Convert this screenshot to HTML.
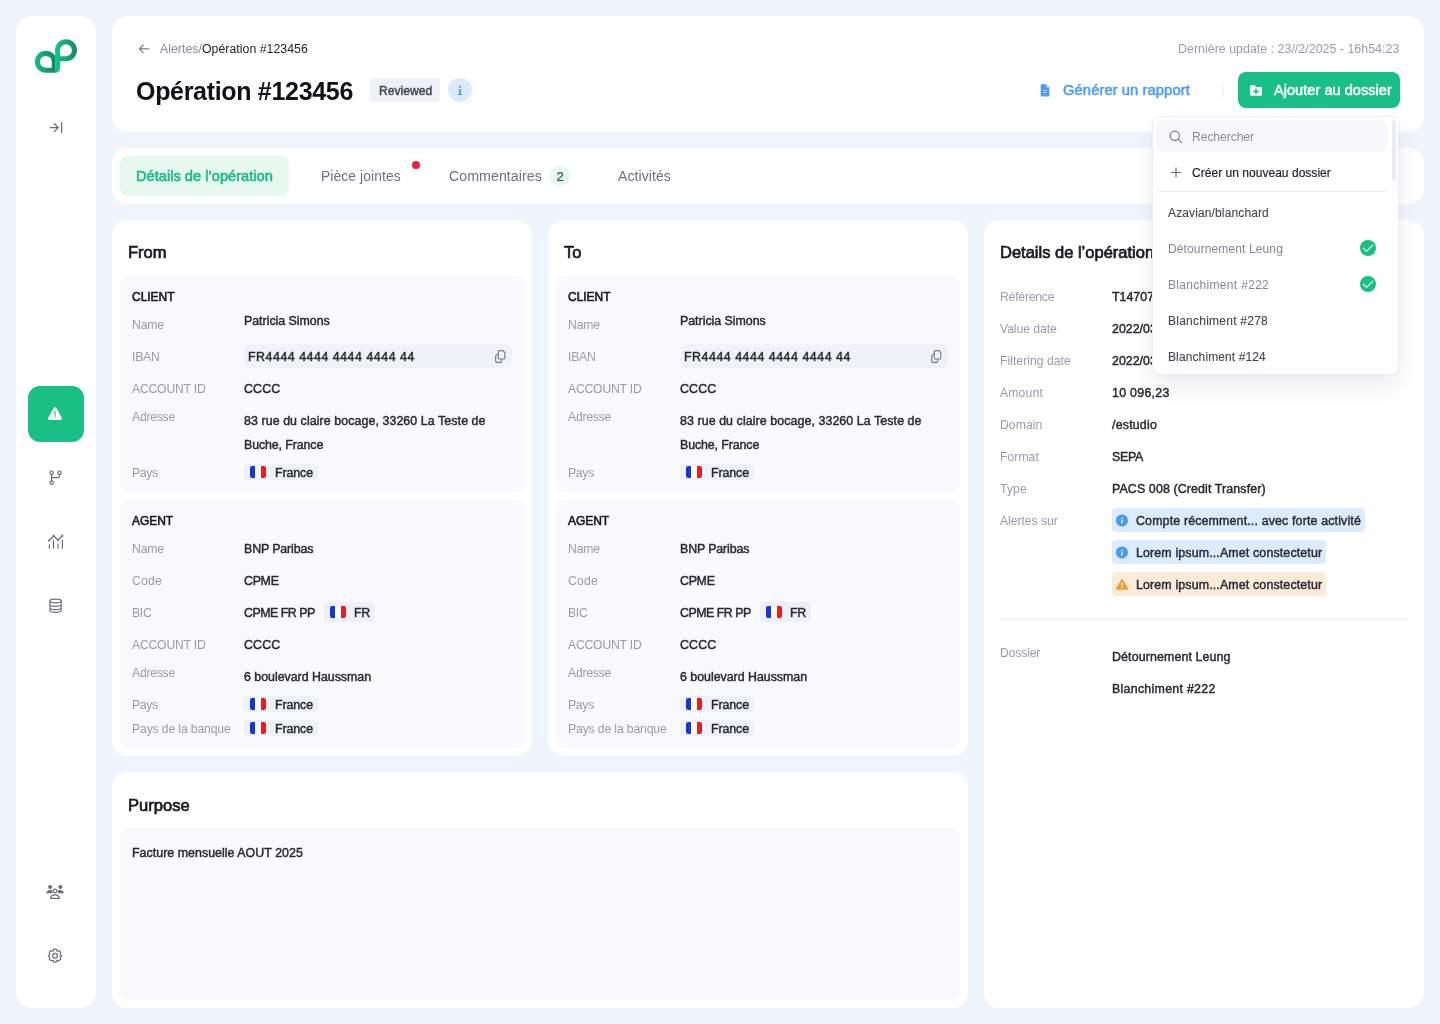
<!DOCTYPE html>
<html><head><meta charset="utf-8">
<style>
*{margin:0;padding:0;box-sizing:border-box}
html,body{width:1440px;height:1024px;overflow:hidden;background:#F0F4FC;font-family:"Liberation Sans",sans-serif;color:#2A2A35}
.a{position:absolute}
.card{position:absolute;background:#fff;border-radius:16px}
.sec{position:absolute;background:#F9F9FE;border-radius:8px}
.t{position:absolute;white-space:nowrap;line-height:20px;height:20px;will-change:transform}
.lb{font-size:11.8px;color:#A3A3B4}
.vl{font-size:12.4px;color:#2A2A35;-webkit-text-stroke:0.25px #2A2A35}
.hd{font-size:15px;font-weight:700;color:#1C1C24;letter-spacing:-0.2px}
.cap{font-size:11.5px;font-weight:700;color:#1C1C24}
.chip{position:absolute;background:#EEF1F5;border-radius:4px;height:16px}
.flag{position:absolute;width:16px;height:12px;border-radius:2px;overflow:hidden;background:linear-gradient(90deg,#1437D9 0,#1437D9 33.3%,#fff 33.3%,#fff 66.6%,#EC1C24 66.6%)}
svg{position:absolute;overflow:visible}
</style></head><body>

<!-- SIDEBAR -->
<div class="card" style="left:16px;top:16px;width:80px;height:992px"></div>
<svg style="left:0;top:0" width="100" height="100" viewBox="0 0 100 100">
<defs>
<linearGradient id="lg1" x1="34.9" y1="0" x2="55" y2="0" gradientUnits="userSpaceOnUse"><stop offset="0" stop-color="#1CBD85"/><stop offset="1" stop-color="#12875E"/></linearGradient>
<linearGradient id="lg2" x1="55" y1="0" x2="77" y2="0" gradientUnits="userSpaceOnUse"><stop offset="0" stop-color="#19C68A"/><stop offset="1" stop-color="#0F8A5E"/></linearGradient>
</defs>
<path fill="url(#lg1)" fill-rule="evenodd" d="M34.87 61.78A11 11 0 0 1 45.87 50.78A11 11 0 0 1 55.05 55.72V72.78H45.87A11 11 0 0 1 34.87 61.78Z M39.97 61.78A5.9 5.9 0 0 0 45.87 67.68H51.77V61.78A5.9 5.9 0 0 0 45.87 55.88A5.9 5.9 0 0 0 39.97 61.78Z"/>
<path fill="url(#lg2)" fill-rule="evenodd" d="M55.05 50.26A11 11 0 0 1 66 39.26A11 11 0 0 1 77 50.26A11 11 0 0 1 66 61.26H60.1V68.08A4.7 4.7 0 0 1 55.4 72.78H55.05Z M60.1 50.26V56.16H66A5.9 5.9 0 0 0 71.9 50.26A5.9 5.9 0 0 0 66 44.36A5.9 5.9 0 0 0 60.1 50.26Z"/>
<g fill="none" stroke="#6B6B7B" stroke-width="1.3" stroke-linecap="round" stroke-linejoin="round">
<path d="M50.2 127.6H58.4M54.4 123.8L58.4 127.6L54.4 131.4M61.6 122.6V132.6"/>
</g>
</svg>
<div class="a" style="left:28px;top:386px;width:56px;height:56px;border-radius:12px;background:#19BF84"></div>
<svg style="left:0;top:0" width="100" height="1024" viewBox="0 0 100 1024">
<path fill="#fff" d="M55 407.3C54.4 407.3 53.9 407.6 53.6 408.1L48.2 417.8C47.6 418.8 48.3 420 49.5 420H60.5C61.7 420 62.4 418.8 61.8 417.8L56.4 408.1C56.1 407.6 55.6 407.3 55 407.3Z"/>
<rect x="54.4" y="411" width="1.2" height="4.8" rx="0.5" fill="#19BF84"/>
<rect x="54.4" y="416.6" width="1.2" height="1.2" rx="0.5" fill="#19BF84"/>
<g fill="none" stroke="#6B6B7B" stroke-width="1.2" stroke-linecap="round" stroke-linejoin="round">
<circle cx="51.6" cy="472.7" r="1.7"/><circle cx="59.5" cy="472.7" r="1.7"/><circle cx="51.6" cy="482.6" r="1.7"/>
<path d="M51.6 474.4V480.9M59.5 474.4V476.2A1.5 1.5 0 0 1 58 477.7H51.6"/>
<path d="M49.1 540.5L53.6 535.8L58 540L62.4 535.8"/>
</g><g fill="#6B6B7B"><circle cx="49.1" cy="540.5" r="1"/><circle cx="53.6" cy="535.8" r="1"/><circle cx="58" cy="540" r="1"/><circle cx="62.4" cy="535.8" r="1"/></g><g fill="none" stroke="#6B6B7B" stroke-width="1.2" stroke-linecap="round" stroke-linejoin="round">
<path d="M49.4 544.8V548.2M53.5 540.6V548.2M58 544.2V548.2M62.4 540.4V548.2"/>
<ellipse cx="55.6" cy="601" rx="5.6" ry="1.8"/>
<path d="M50 601V610.6C50 611.6 52.5 612.4 55.6 612.4C58.7 612.4 61.2 611.6 61.2 610.6V601M50 604.6C50 605.6 52.5 606.4 55.6 606.4C58.7 606.4 61.2 605.6 61.2 604.6M50 607.8C50 608.8 52.5 609.6 55.6 609.6C58.7 609.6 61.2 608.8 61.2 607.8"/>
</g>
<g fill="#6B6B7B">
<circle cx="50.1" cy="886.9" r="2"/><circle cx="60.4" cy="886.9" r="2"/>
<path d="M46.2 893.3C46.4 891.3 47.8 890 50 890C51.2 890 52 890.3 52.6 890.8L51.8 893.3Z"/>
<path d="M63.9 893.3C63.7 891.3 62.3 890 60.1 890C58.9 890 58.1 890.3 57.5 890.8L58.3 893.3Z"/>
</g>
<g fill="none" stroke="#6B6B7B" stroke-width="1.2" stroke-linejoin="round">
<circle cx="55" cy="891" r="1.9"/>
<path d="M50.6 898.3C50.8 896 52.6 894.8 55 894.8C57.4 894.8 59.2 896 59.4 898.3Z"/>
<path d="M53.7 949.2H56.3L56.9 951.2L58.9 950.6L60.7 952.3L60.2 954.4L61.7 955.7L60.2 957L60.7 959.1L58.9 960.8L56.9 960.2L56.3 962.2H53.7L53.1 960.2L51.1 960.8L49.3 959.1L49.8 957L48.3 955.7L49.8 954.4L49.3 952.3L51.1 950.6L53.1 951.2Z"/>
<circle cx="55" cy="955.7" r="2.4"/>
</g>
</svg>

<!-- HEADER -->
<div class="card" style="left:112px;top:16px;width:1312px;height:116px"></div>
<svg style="left:0;top:0" width="1440" height="120" viewBox="0 0 1440 120">
<path d="M148.7 48.8H139.6M143.2 45L139.4 48.8L143.2 52.6" fill="none" stroke="#7C7C8C" stroke-width="1.2" stroke-linecap="round" stroke-linejoin="round"/>
<circle cx="460" cy="90" r="12" fill="#DCEAFD"/>
<g fill="#4B9BFF"><rect x="459" y="85.9" width="2" height="1.9" rx="0.3"/><path d="M458 89.2H461V94.1H462.1V95H458V94.1H459.1V90.1H458Z"/></g>
<path fill="#4B9BFF" d="M1041.8 84.3H1046.3L1049.4 87.4V95.3A1.2 1.2 0 0 1 1048.2 96.5H1041.9A1.2 1.2 0 0 1 1040.7 95.3V85.5A1.2 1.2 0 0 1 1041.8 84.3Z"/>
<g stroke="#fff" stroke-width="0.9" opacity="0.75"><path d="M1043.1 90.5H1046.9M1043.1 92.6H1046.9"/></g>
<path fill="#fff" opacity="0.6" d="M1046 84.6V86.8A0.8 0.8 0 0 0 1046.8 87.6H1049Z"/>
<rect x="1222.4" y="82" width="1" height="15.5" fill="#ECECF4"/>
<rect x="1238" y="72" width="162" height="36" rx="8" fill="#19BF84"/>
<path fill="#fff" d="M1251.1 85.1H1254.6L1256 86.9H1260.9A1 1 0 0 1 1261.9 87.9V94.8A1 1 0 0 1 1260.9 95.8H1251.1A1 1 0 0 1 1250.1 94.8V86.1A1 1 0 0 1 1251.1 85.1Z"/>
<path d="M1256 89.1V93.7M1253.7 91.4H1258.3" stroke="#19BF84" stroke-width="1.5" stroke-linecap="round"/>
</svg>
<div class="a" style="left:370px;top:78px;width:70px;height:24px;border-radius:4px;background:#F0F0F8"></div>

<!-- TABS -->
<div class="card" style="left:112px;top:148px;width:1312px;height:56px"></div>
<div class="a" style="left:120px;top:156px;width:169px;height:40px;border-radius:8px;background:#E6F8F0"></div>
<div class="a" style="left:412px;top:161px;width:8px;height:8px;border-radius:50%;background:#E8203A"></div>
<div class="a" style="left:550px;top:166px;width:20px;height:20px;border-radius:50%;background:#E6F8F0"></div>


<div class="t" style="left:160.00px;top:39.10px;font-size:12.3px;color:#8A8A9A;letter-spacing:0.033px;">Alertes/<span style="color:#1E1E28">Opération #123456</span></div>
<div class="t" style="left:136.20px;top:76.20px;font-size:25px;color:#111118;line-height:30px;height:30px;font-weight:700;letter-spacing:-0.315px;">Opération #123456</div>
<div class="t" style="left:378.70px;top:80.50px;font-size:12px;color:#44444F;-webkit-text-stroke:0.45px #44444F;letter-spacing:0.085px;">Reviewed</div>
<div class="t" style="left:1178.00px;top:39.00px;font-size:12.4px;color:#9A9AAC;letter-spacing:0.022px;">Dernière update : 23//2/2025 - 16h54:23</div>
<div class="t" style="left:1063.30px;top:80.20px;font-size:14.8px;color:#4B9BFF;-webkit-text-stroke:0.5px #4B9BFF;letter-spacing:0.055px;">Générer un rapport</div>
<div class="t" style="left:1274.40px;top:80.20px;font-size:14.5px;color:#FFFFFF;-webkit-text-stroke:0.5px #FFFFFF;letter-spacing:0.054px;">Ajouter au dossier</div>
<div class="t" style="left:135.80px;top:166.00px;font-size:14.6px;color:#1BBB80;-webkit-text-stroke:0.6px #1BBB80;letter-spacing:0.024px;">Détails de l’opération</div>
<div class="t" style="left:321.00px;top:166.00px;font-size:13.9px;color:#707082;letter-spacing:0.086px;">Pièce jointes</div>
<div class="t" style="left:449.40px;top:166.00px;font-size:14.15px;color:#707082;letter-spacing:0.077px;">Commentaires</div>
<div class="t" style="left:550.00px;top:167.00px;font-size:13px;color:#0F5A3C;-webkit-text-stroke:0.2px #0F5A3C;width:20px;text-align:center;">2</div>
<div class="t" style="left:618.30px;top:166.00px;font-size:14px;color:#707082;letter-spacing:0.084px;">Activités</div>
<!-- FROM -->
<div class="card" style="left:112px;top:220px;width:420px;height:536px"></div>
<div class="t" style="left:128.30px;top:242.20px;font-size:16.5px;color:#1A1A22;-webkit-text-stroke:0.7px #1A1A22;">From</div>
<div class="sec" style="left:120px;top:276px;width:404px;height:216px"></div>
<div class="sec" style="left:120px;top:500px;width:404px;height:248px"></div>
<div class="t" style="left:132.20px;top:286.50px;font-size:12px;color:#1A1A22;-webkit-text-stroke:0.6px #1A1A22;letter-spacing:-0.037px;">CLIENT</div>
<div class="t" style="left:132.40px;top:314.80px;font-size:12.2px;color:#9A9AAC;letter-spacing:-0.139px;">Name</div>
<div class="t" style="left:243.90px;top:311.20px;font-size:12.4px;color:#2A2A35;-webkit-text-stroke:0.45px #2A2A35;letter-spacing:-0.020px;">Patricia Simons</div>
<div class="t" style="left:132.40px;top:346.50px;font-size:12.2px;color:#9A9AAC;letter-spacing:-0.218px;">IBAN</div>
<div class="a" style="left:244px;top:344px;width:268px;height:24px;border-radius:6px;background:#F1F1F8"></div>
<div class="t" style="left:247.90px;top:346.50px;font-size:12.4px;color:#2A2A35;-webkit-text-stroke:0.45px #2A2A35;letter-spacing:0.521px;">FR4444 4444 4444 4444 44</div>
<svg style="left:0px;top:0" width="600" height="400" viewBox="0 0 600 400"><g fill="none" stroke="#76768A" stroke-width="1.1" stroke-linejoin="round"><path d="M499.4 350.6H502.9L504.8 352.5V357.9A1.1 1.1 0 0 1 503.7 359H499.4A1.1 1.1 0 0 1 498.3 357.9V351.7A1.1 1.1 0 0 1 499.4 350.6Z"/><path d="M498.3 353.8L495.7 355.6V361.3A1.1 1.1 0 0 0 496.8 362.4H500.6A1.1 1.1 0 0 0 501.7 361.3V359"/></g></svg>
<div class="t" style="left:132.40px;top:378.50px;font-size:12.2px;color:#9A9AAC;letter-spacing:-0.203px;">ACCOUNT ID</div>
<div class="t" style="left:243.90px;top:378.50px;font-size:12.4px;color:#2A2A35;-webkit-text-stroke:0.45px #2A2A35;letter-spacing:0.134px;">CCCC</div>
<div class="t" style="left:132.40px;top:406.70px;font-size:12.2px;color:#9A9AAC;letter-spacing:-0.253px;">Adresse</div>
<div class="t" style="left:243.90px;top:410.80px;font-size:12.4px;color:#2A2A35;-webkit-text-stroke:0.45px #2A2A35;letter-spacing:0.082px;">83 rue du claire bocage, 33260 La Teste de</div>
<div class="t" style="left:243.90px;top:434.80px;font-size:12.4px;color:#2A2A35;-webkit-text-stroke:0.45px #2A2A35;letter-spacing:-0.108px;">Buche, France</div>
<div class="t" style="left:132.40px;top:463.10px;font-size:12.2px;color:#9A9AAC;letter-spacing:-0.300px;">Pays</div>
<div class="a" style="left:244px;top:464px;width:74px;height:16px;border-radius:4px;background:#EEF1F5"></div>
<div class="flag" style="left:250px;top:466.0px"></div>
<div class="t" style="left:274.60px;top:463.10px;font-size:12.4px;color:#2A2A35;-webkit-text-stroke:0.45px #2A2A35;letter-spacing:-0.096px;">France</div>
<div class="t" style="left:132.40px;top:510.90px;font-size:12px;color:#1A1A22;-webkit-text-stroke:0.6px #1A1A22;letter-spacing:-0.061px;">AGENT</div>
<div class="t" style="left:132.40px;top:538.60px;font-size:12.2px;color:#9A9AAC;letter-spacing:-0.139px;">Name</div>
<div class="t" style="left:243.90px;top:538.60px;font-size:12.4px;color:#2A2A35;-webkit-text-stroke:0.45px #2A2A35;letter-spacing:-0.122px;">BNP Paribas</div>
<div class="t" style="left:132.40px;top:570.50px;font-size:12.2px;color:#9A9AAC;letter-spacing:0.220px;">Code</div>
<div class="t" style="left:243.90px;top:570.50px;font-size:12.4px;color:#2A2A35;-webkit-text-stroke:0.45px #2A2A35;letter-spacing:-0.300px;">CPME</div>
<div class="t" style="left:132.40px;top:602.50px;font-size:12.2px;color:#9A9AAC;letter-spacing:-0.300px;">BIC</div>
<div class="t" style="left:243.90px;top:602.50px;font-size:12.4px;color:#2A2A35;-webkit-text-stroke:0.45px #2A2A35;letter-spacing:-0.493px;">CPME FR PP</div>
<div class="a" style="left:324px;top:602px;width:51px;height:20px;border-radius:4px;background:#EEEFF8"></div>
<div class="flag" style="left:330px;top:606.0px"></div>
<div class="t" style="left:354.00px;top:602.50px;font-size:12.4px;color:#2A2A35;-webkit-text-stroke:0.45px #2A2A35;letter-spacing:-0.300px;">FR</div>
<div class="t" style="left:132.40px;top:634.60px;font-size:12.2px;color:#9A9AAC;letter-spacing:-0.203px;">ACCOUNT ID</div>
<div class="t" style="left:243.90px;top:634.60px;font-size:12.4px;color:#2A2A35;-webkit-text-stroke:0.45px #2A2A35;letter-spacing:0.134px;">CCCC</div>
<div class="t" style="left:132.40px;top:663.00px;font-size:12.2px;color:#9A9AAC;letter-spacing:-0.253px;">Adresse</div>
<div class="t" style="left:243.90px;top:667.00px;font-size:12.4px;color:#2A2A35;-webkit-text-stroke:0.45px #2A2A35;letter-spacing:-0.017px;">6 boulevard Haussman</div>
<div class="t" style="left:132.40px;top:695.00px;font-size:12.2px;color:#9A9AAC;letter-spacing:-0.300px;">Pays</div>
<div class="a" style="left:244px;top:696px;width:74px;height:16px;border-radius:4px;background:#EEF1F5"></div>
<div class="flag" style="left:250px;top:698.0px"></div>
<div class="t" style="left:274.60px;top:695.00px;font-size:12.4px;color:#2A2A35;-webkit-text-stroke:0.45px #2A2A35;letter-spacing:-0.096px;">France</div>
<div class="t" style="left:132.40px;top:718.50px;font-size:12.2px;color:#9A9AAC;letter-spacing:-0.136px;">Pays de la banque</div>
<div class="a" style="left:244px;top:720px;width:74px;height:16px;border-radius:4px;background:#EEF1F5"></div>
<div class="flag" style="left:250px;top:722.0px"></div>
<div class="t" style="left:274.60px;top:718.50px;font-size:12.4px;color:#2A2A35;-webkit-text-stroke:0.45px #2A2A35;letter-spacing:-0.096px;">France</div>
<!-- TO -->
<div class="card" style="left:548px;top:220px;width:420px;height:536px"></div>
<div class="t" style="left:564.30px;top:242.20px;font-size:16.5px;color:#1A1A22;-webkit-text-stroke:0.7px #1A1A22;">To</div>
<div class="sec" style="left:556px;top:276px;width:404px;height:216px"></div>
<div class="sec" style="left:556px;top:500px;width:404px;height:248px"></div>
<div class="t" style="left:568.20px;top:286.50px;font-size:12px;color:#1A1A22;-webkit-text-stroke:0.6px #1A1A22;letter-spacing:-0.037px;">CLIENT</div>
<div class="t" style="left:568.40px;top:314.80px;font-size:12.2px;color:#9A9AAC;letter-spacing:-0.139px;">Name</div>
<div class="t" style="left:679.90px;top:311.20px;font-size:12.4px;color:#2A2A35;-webkit-text-stroke:0.45px #2A2A35;letter-spacing:-0.020px;">Patricia Simons</div>
<div class="t" style="left:568.40px;top:346.50px;font-size:12.2px;color:#9A9AAC;letter-spacing:-0.218px;">IBAN</div>
<div class="a" style="left:680px;top:344px;width:268px;height:24px;border-radius:6px;background:#F1F1F8"></div>
<div class="t" style="left:683.90px;top:346.50px;font-size:12.4px;color:#2A2A35;-webkit-text-stroke:0.45px #2A2A35;letter-spacing:0.521px;">FR4444 4444 4444 4444 44</div>
<svg style="left:436px;top:0" width="600" height="400" viewBox="0 0 600 400"><g fill="none" stroke="#76768A" stroke-width="1.1" stroke-linejoin="round"><path d="M499.4 350.6H502.9L504.8 352.5V357.9A1.1 1.1 0 0 1 503.7 359H499.4A1.1 1.1 0 0 1 498.3 357.9V351.7A1.1 1.1 0 0 1 499.4 350.6Z"/><path d="M498.3 353.8L495.7 355.6V361.3A1.1 1.1 0 0 0 496.8 362.4H500.6A1.1 1.1 0 0 0 501.7 361.3V359"/></g></svg>
<div class="t" style="left:568.40px;top:378.50px;font-size:12.2px;color:#9A9AAC;letter-spacing:-0.203px;">ACCOUNT ID</div>
<div class="t" style="left:679.90px;top:378.50px;font-size:12.4px;color:#2A2A35;-webkit-text-stroke:0.45px #2A2A35;letter-spacing:0.134px;">CCCC</div>
<div class="t" style="left:568.40px;top:406.70px;font-size:12.2px;color:#9A9AAC;letter-spacing:-0.253px;">Adresse</div>
<div class="t" style="left:679.90px;top:410.80px;font-size:12.4px;color:#2A2A35;-webkit-text-stroke:0.45px #2A2A35;letter-spacing:0.082px;">83 rue du claire bocage, 33260 La Teste de</div>
<div class="t" style="left:679.90px;top:434.80px;font-size:12.4px;color:#2A2A35;-webkit-text-stroke:0.45px #2A2A35;letter-spacing:-0.108px;">Buche, France</div>
<div class="t" style="left:568.40px;top:463.10px;font-size:12.2px;color:#9A9AAC;letter-spacing:-0.300px;">Pays</div>
<div class="a" style="left:680px;top:464px;width:74px;height:16px;border-radius:4px;background:#EEF1F5"></div>
<div class="flag" style="left:686px;top:466.0px"></div>
<div class="t" style="left:710.60px;top:463.10px;font-size:12.4px;color:#2A2A35;-webkit-text-stroke:0.45px #2A2A35;letter-spacing:-0.096px;">France</div>
<div class="t" style="left:568.40px;top:510.90px;font-size:12px;color:#1A1A22;-webkit-text-stroke:0.6px #1A1A22;letter-spacing:-0.061px;">AGENT</div>
<div class="t" style="left:568.40px;top:538.60px;font-size:12.2px;color:#9A9AAC;letter-spacing:-0.139px;">Name</div>
<div class="t" style="left:679.90px;top:538.60px;font-size:12.4px;color:#2A2A35;-webkit-text-stroke:0.45px #2A2A35;letter-spacing:-0.122px;">BNP Paribas</div>
<div class="t" style="left:568.40px;top:570.50px;font-size:12.2px;color:#9A9AAC;letter-spacing:0.220px;">Code</div>
<div class="t" style="left:679.90px;top:570.50px;font-size:12.4px;color:#2A2A35;-webkit-text-stroke:0.45px #2A2A35;letter-spacing:-0.300px;">CPME</div>
<div class="t" style="left:568.40px;top:602.50px;font-size:12.2px;color:#9A9AAC;letter-spacing:-0.300px;">BIC</div>
<div class="t" style="left:679.90px;top:602.50px;font-size:12.4px;color:#2A2A35;-webkit-text-stroke:0.45px #2A2A35;letter-spacing:-0.493px;">CPME FR PP</div>
<div class="a" style="left:760px;top:602px;width:51px;height:20px;border-radius:4px;background:#EEEFF8"></div>
<div class="flag" style="left:766px;top:606.0px"></div>
<div class="t" style="left:790.00px;top:602.50px;font-size:12.4px;color:#2A2A35;-webkit-text-stroke:0.45px #2A2A35;letter-spacing:-0.300px;">FR</div>
<div class="t" style="left:568.40px;top:634.60px;font-size:12.2px;color:#9A9AAC;letter-spacing:-0.203px;">ACCOUNT ID</div>
<div class="t" style="left:679.90px;top:634.60px;font-size:12.4px;color:#2A2A35;-webkit-text-stroke:0.45px #2A2A35;letter-spacing:0.134px;">CCCC</div>
<div class="t" style="left:568.40px;top:663.00px;font-size:12.2px;color:#9A9AAC;letter-spacing:-0.253px;">Adresse</div>
<div class="t" style="left:679.90px;top:667.00px;font-size:12.4px;color:#2A2A35;-webkit-text-stroke:0.45px #2A2A35;letter-spacing:-0.017px;">6 boulevard Haussman</div>
<div class="t" style="left:568.40px;top:695.00px;font-size:12.2px;color:#9A9AAC;letter-spacing:-0.300px;">Pays</div>
<div class="a" style="left:680px;top:696px;width:74px;height:16px;border-radius:4px;background:#EEF1F5"></div>
<div class="flag" style="left:686px;top:698.0px"></div>
<div class="t" style="left:710.60px;top:695.00px;font-size:12.4px;color:#2A2A35;-webkit-text-stroke:0.45px #2A2A35;letter-spacing:-0.096px;">France</div>
<div class="t" style="left:568.40px;top:718.50px;font-size:12.2px;color:#9A9AAC;letter-spacing:-0.136px;">Pays de la banque</div>
<div class="a" style="left:680px;top:720px;width:74px;height:16px;border-radius:4px;background:#EEF1F5"></div>
<div class="flag" style="left:686px;top:722.0px"></div>
<div class="t" style="left:710.60px;top:718.50px;font-size:12.4px;color:#2A2A35;-webkit-text-stroke:0.45px #2A2A35;letter-spacing:-0.096px;">France</div>
<!-- DETAILS -->
<div class="card" style="left:984px;top:220px;width:440px;height:788px"></div>
<div class="t" style="left:1000.30px;top:242.20px;font-size:16.5px;color:#1A1A22;-webkit-text-stroke:0.7px #1A1A22;">Details de l’opération</div>
<div class="t" style="left:1000.40px;top:286.50px;font-size:12.2px;color:#9A9AAC;letter-spacing:-0.217px;">Référence</div>
<div class="t" style="left:1111.80px;top:286.50px;font-size:12.4px;color:#2A2A35;-webkit-text-stroke:0.45px #2A2A35;">T147070000000001</div>
<div class="t" style="left:1000.40px;top:318.50px;font-size:12.2px;color:#9A9AAC;letter-spacing:-0.064px;">Value date</div>
<div class="t" style="left:1111.80px;top:318.50px;font-size:12.4px;color:#2A2A35;-webkit-text-stroke:0.45px #2A2A35;">2022/03/19</div>
<div class="t" style="left:1000.40px;top:350.50px;font-size:12.2px;color:#9A9AAC;letter-spacing:0.027px;">Filtering date</div>
<div class="t" style="left:1111.80px;top:350.50px;font-size:12.4px;color:#2A2A35;-webkit-text-stroke:0.45px #2A2A35;">2022/03/19</div>
<div class="t" style="left:1000.40px;top:382.50px;font-size:12.2px;color:#9A9AAC;letter-spacing:0.157px;">Amount</div>
<div class="t" style="left:1111.80px;top:382.50px;font-size:12.4px;color:#2A2A35;-webkit-text-stroke:0.45px #2A2A35;letter-spacing:0.284px;">10 096,23</div>
<div class="t" style="left:1000.40px;top:414.50px;font-size:12.2px;color:#9A9AAC;letter-spacing:0.060px;">Domain</div>
<div class="t" style="left:1111.80px;top:414.50px;font-size:12.4px;color:#2A2A35;-webkit-text-stroke:0.45px #2A2A35;letter-spacing:0.199px;">/estudio</div>
<div class="t" style="left:1000.40px;top:446.50px;font-size:12.2px;color:#9A9AAC;letter-spacing:0.038px;">Format</div>
<div class="t" style="left:1111.80px;top:446.50px;font-size:12.4px;color:#2A2A35;-webkit-text-stroke:0.45px #2A2A35;letter-spacing:-0.300px;">SEPA</div>
<div class="t" style="left:1000.40px;top:478.50px;font-size:12.2px;color:#9A9AAC;letter-spacing:0.126px;">Type</div>
<div class="t" style="left:1111.80px;top:478.50px;font-size:12.4px;color:#2A2A35;-webkit-text-stroke:0.45px #2A2A35;letter-spacing:0.121px;">PACS 008 (Credit Transfer)</div>
<div class="t" style="left:1000.40px;top:510.50px;font-size:12.2px;color:#9A9AAC;letter-spacing:-0.045px;">Alertes sur</div>
<div class="a" style="left:1112px;top:508px;width:253px;height:24px;border-radius:4px;background:#DCEBFD"></div>
<div class="a" style="left:1112px;top:540px;width:214px;height:24px;border-radius:4px;background:#DCEBFD"></div>
<div class="a" style="left:1112px;top:572px;width:214px;height:24px;border-radius:4px;background:#FDEBDA"></div>
<svg style="left:0;top:0" width="1440" height="1024" viewBox="0 0 1440 1024">
<g><circle cx="1122" cy="520.5" r="6" fill="#4B97F5"/><rect x="1121.3" y="517.6" width="1.4" height="1.3" fill="#fff"/><rect x="1121.3" y="519.7" width="1.4" height="3.7" fill="#fff"/></g>
<g><circle cx="1122" cy="552.6" r="6" fill="#4B97F5"/><rect x="1121.3" y="549.7" width="1.4" height="1.3" fill="#fff"/><rect x="1121.3" y="551.8" width="1.4" height="3.7" fill="#fff"/></g>
<g><path d="M1122 579.8L1127.4 589H1116.6Z" fill="#F29A38" stroke="#F29A38" stroke-width="1.6" stroke-linejoin="round"/><rect x="1121.35" y="582.6" width="1.3" height="3.4" fill="#fff"/><rect x="1121.35" y="587" width="1.3" height="1.2" fill="#fff"/></g>
</svg>
<div class="t" style="left:1136.00px;top:511.20px;font-size:12.4px;color:#2A2A35;-webkit-text-stroke:0.45px #2A2A35;letter-spacing:0.153px;">Compte récemment... avec forte activité</div>
<div class="t" style="left:1136.00px;top:543.20px;font-size:12.4px;color:#2A2A35;-webkit-text-stroke:0.45px #2A2A35;letter-spacing:0.143px;">Lorem ipsum...Amet constectetur</div>
<div class="t" style="left:1136.00px;top:575.20px;font-size:12.4px;color:#2A2A35;-webkit-text-stroke:0.45px #2A2A35;letter-spacing:0.143px;">Lorem ipsum...Amet constectetur</div>
<div class="a" style="left:1000px;top:619px;width:408px;height:1px;background:#EEEEF6"></div>
<div class="t" style="left:1000.40px;top:643.00px;font-size:12.2px;color:#9A9AAC;letter-spacing:-0.152px;">Dossier</div>
<div class="t" style="left:1111.80px;top:647.00px;font-size:12.4px;color:#2A2A35;-webkit-text-stroke:0.45px #2A2A35;letter-spacing:0.122px;">Détournement Leung</div>
<div class="t" style="left:1111.80px;top:679.00px;font-size:12.4px;color:#2A2A35;-webkit-text-stroke:0.45px #2A2A35;letter-spacing:0.273px;">Blanchiment #222</div>
<!-- PURPOSE -->
<div class="card" style="left:112px;top:772px;width:856px;height:236px"></div>
<div class="t" style="left:128.10px;top:794.50px;font-size:16.5px;color:#1A1A22;-webkit-text-stroke:0.7px #1A1A22;letter-spacing:0.055px;">Purpose</div>
<div class="sec" style="left:120px;top:828px;width:840px;height:172px"></div>
<div class="t" style="left:132.40px;top:842.50px;font-size:12.4px;color:#2A2A35;-webkit-text-stroke:0.45px #2A2A35;letter-spacing:0.035px;">Facture mensuelle AOUT 2025</div>
<!-- DROPDOWN -->
<div class="a" style="left:1152.2px;top:116.4px;width:247.2px;height:259px;border-radius:8px;background:#fff;border:1px solid #ECECF8;box-shadow:0 12px 22px rgba(30,30,70,0.075),0 1px 4px rgba(30,30,70,0.03)"></div>
<div class="a" style="left:1156px;top:120px;width:232px;height:32px;border-radius:6px;background:#F8F8FD"></div>
<div class="a" style="left:1392px;top:120px;width:4px;height:60px;border-radius:2px;background:#EBEBF4"></div>
<div class="a" style="left:1156px;top:191px;width:232px;height:1px;background:#EDEDF6"></div>
<svg style="left:0;top:0" width="1440" height="400" viewBox="0 0 1440 400">
<g fill="none" stroke="#7A7A8A" stroke-width="1.2" stroke-linecap="round"><circle cx="1174.8" cy="135.8" r="4.6"/><path d="M1178.2 139.2L1181.6 142.6"/></g>
<path d="M1176 167.8V177.2M1171.3 172.5H1180.7" stroke="#6A6A7A" stroke-width="1.1" stroke-linecap="round"/>
<g><circle cx="1368" cy="248" r="8" fill="#19BF84"/><path d="M1363.3 248.2L1366.5 251.4L1372.8 245.1" fill="none" stroke="#fff" stroke-width="1.15" stroke-linecap="round" stroke-linejoin="round"/></g>
<g><circle cx="1368" cy="284" r="8" fill="#19BF84"/><path d="M1363.3 284.2L1366.5 287.4L1372.8 281.1" fill="none" stroke="#fff" stroke-width="1.15" stroke-linecap="round" stroke-linejoin="round"/></g>
</svg>
<div class="t" style="left:1191.80px;top:126.70px;font-size:12.2px;color:#8A8A9A;letter-spacing:-0.100px;">Rechercher</div>
<div class="t" style="left:1192.00px;top:162.50px;font-size:12px;color:#1F1F2A;-webkit-text-stroke:0.2px #1F1F2A;letter-spacing:0.031px;">Créer un nouveau dossier</div>
<div class="t" style="left:1168.00px;top:203.00px;font-size:12px;color:#454552;-webkit-text-stroke:0.1px #454552;letter-spacing:0.129px;">Azavian/blanchard</div>
<div class="t" style="left:1168.00px;top:239.00px;font-size:12px;color:#858595;letter-spacing:0.121px;">Détournement Leung</div>
<div class="t" style="left:1168.00px;top:275.00px;font-size:12px;color:#858595;letter-spacing:0.315px;">Blanchiment #222</div>
<div class="t" style="left:1168.00px;top:310.50px;font-size:12px;color:#454552;-webkit-text-stroke:0.1px #454552;letter-spacing:0.248px;">Blanchiment #278</div>
<div class="t" style="left:1168.00px;top:346.50px;font-size:12px;color:#454552;-webkit-text-stroke:0.1px #454552;letter-spacing:0.115px;">Blanchiment #124</div>

</body></html>
